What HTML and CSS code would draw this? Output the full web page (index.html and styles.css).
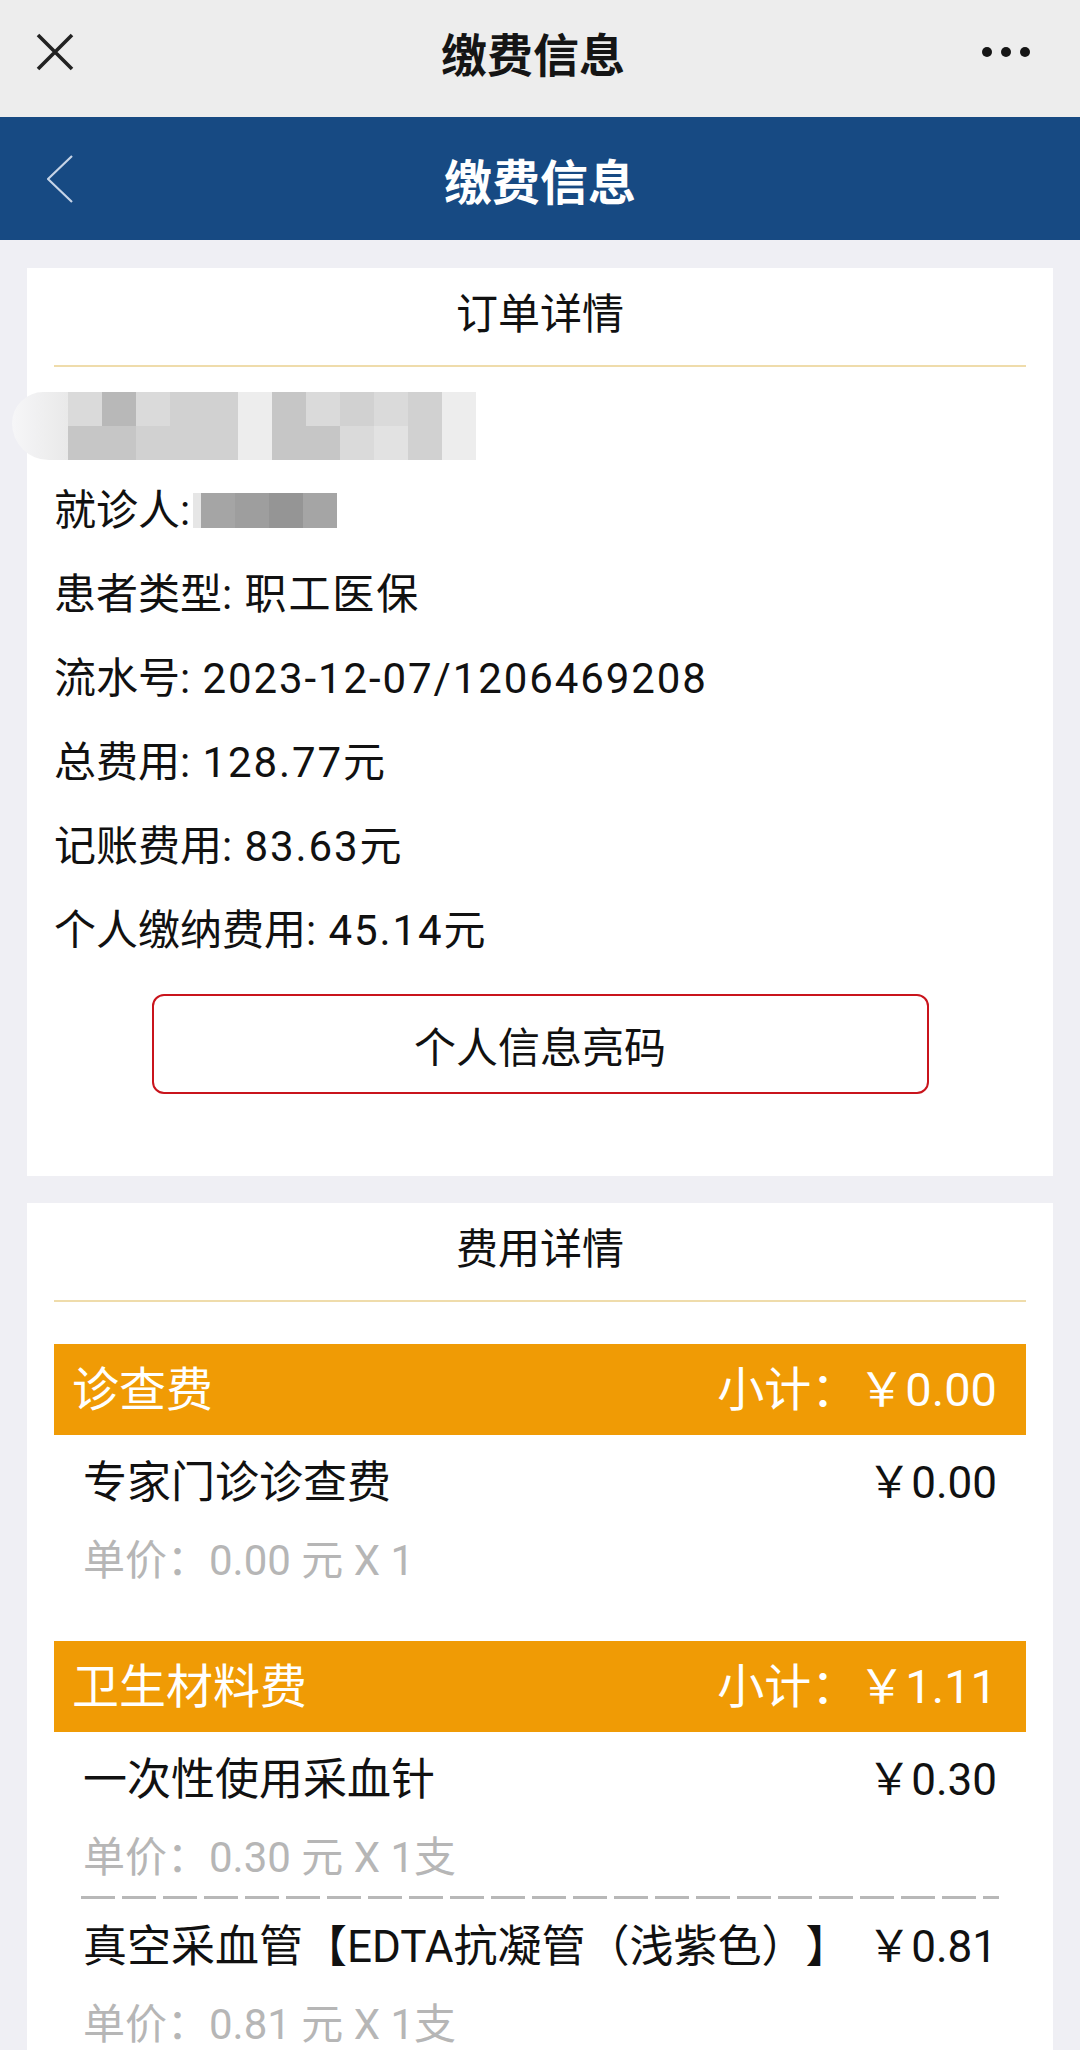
FILE: index.html
```html
<!doctype html>
<html lang="zh-CN">
<head>
	<meta charset="UTF-8">
	<title>缴费信息</title>
	<link rel="stylesheet" href="styles.css">
</head>
<body>
	<div class="topbar">
		<span class="close">
			<svg width="38" height="38" viewBox="0 0 38 38"><path d="M2 2L36 36M36 2L2 36" stroke="#222" stroke-width="3.6" fill="none"/></svg>
		</span>
		<h1 class="topbar_title">缴费信息</h1>
		<span class="more"><i></i><i></i><i></i></span>
	</div>
	<div class="header">
		<span class="back">
			<svg width="26" height="48" viewBox="0 0 26 48"><path d="M25 1L1 24L25 47" stroke="#c6d4e7" stroke-width="2.2" fill="none"/></svg>
		</span>
		<h2 class="header_title">缴费信息</h2>
		<span></span>
	</div>

	<div class="warp">
		<div class="card">
			<div class="card_title">订单详情</div>
			<div class="mask">
				<span class="smear"></span>
				<div class="pix">
					<i class="s2"></i><i class="s5"></i><i class="s2"></i><i class="s3"></i><i class="s3"></i><i class="s1"></i>
					<i class="s4"></i><i class="s2"></i><i class="s3"></i><i class="s2"></i><i class="s3"></i><i class="s1"></i>
					<i class="s4"></i><i class="s4"></i><i class="s3"></i><i class="s3"></i><i class="s3"></i><i class="s1"></i>
					<i class="s4"></i><i class="s4"></i><i class="s2"></i><i class="s6"></i><i class="s3"></i><i class="s1"></i>
				</div>
			</div>
			<div class="info">
				<div class="row">就诊人:<span class="name_mask"><i class="l1"></i><i class="d1"></i><i class="d2"></i><i class="d3"></i><i class="d1"></i></span></div>
				<div class="row">患者类型:<span class="val"> 职工医保</span></div>
				<div class="row">流水号:<span class="val"> 2023-12-07/1206469208</span></div>
				<div class="row">总费用:<span class="val"> 128.77</span>元</div>
				<div class="row">记账费用:<span class="val"> 83.63</span>元</div>
				<div class="row">个人缴纳费用:<span class="val"> 45.14</span>元</div>
			</div>
			<div class="btn">个人信息亮码</div>
		</div>

		<div class="card card_fee">
			<div class="card_title">费用详情</div>
			<div class="group">
				<div class="bar"><span>诊查费</span><span>小计：￥0.00</span></div>
				<div class="item">
					<div class="item_top"><span>专家门诊诊查费</span><span>￥0.00</span></div>
					<div class="item_price">单价：0.00 元 X 1</div>
				</div>
			</div>
			<div class="group">
				<div class="bar"><span>卫生材料费</span><span>小计：￥1.11</span></div>
				<div class="item">
					<div class="item_top"><span>一次性使用采血针</span><span>￥0.30</span></div>
					<div class="item_price">单价：0.30 元 X 1支</div>
				</div>
				<div class="sep"></div>
				<div class="item">
					<div class="item_top"><span>真空采血管【EDTA抗凝管（浅紫色）】</span><span>￥0.81</span></div>
					<div class="item_price">单价：0.81 元 X 1支</div>
				</div>
			</div>
		</div>
	</div>
</body>
</html>
```

FILE: styles.css
```css
*{
	margin: 0;
	padding: 0;
	box-sizing: border-box;
}
body{
	background: #efeff4;
	font-family: Roboto, "Noto Sans CJK SC", sans-serif;
	color: #111;
	text-spacing-trim: space-all;
}
.topbar{
	height: 117px;
	padding: 0 50px 13px 36px;
	background: #ededed;
	display: grid;
	grid-template-columns: 1fr auto 1fr;
	align-items: center;
}
.close svg{
	display: block;
}
.topbar_title{
	font-size: 46px;
	font-weight: bold;
	color: #151515;
}
.more{
	display: flex;
	justify-content: flex-end;
	gap: 9px;
}
.more i{
	width: 10px;
	height: 10px;
	border-radius: 50%;
	background: #161616;
}
.header{
	height: 123px;
	padding: 0 47px;
	background: #174a83;
	display: grid;
	grid-template-columns: 1fr auto 1fr;
	align-items: center;
}
.back svg{
	display: block;
}
.header_title{
	font-size: 48px;
	font-weight: bold;
	color: #fff;
}

.warp{
	padding: 28px 27px 40px;
	display: flex;
	flex-direction: column;
	gap: 27px;
}
.card{
	background: #fff;
	padding: 0 27px 82px;
}
.card_title{
	font-size: 42px;
	line-height: 48px;
	padding: 23px 0 26px;
	text-align: center;
	border-bottom: 2px solid #efdcab;
}

.mask{
	display: flex;
	margin: 25px 0 0 -42px;
	height: 68px;
}
.smear{
	width: 56px;
	border-radius: 34px 0 0 40px;
	background: linear-gradient(to right, #f6f6f8, #e9e9e9);
}
.pix{
	display: grid;
	grid-template-columns: repeat(12, 34px);
	grid-auto-rows: 34px;
}
.s1{ background: #ededed; }
.s2{ background: #dadada; }
.s3{ background: #d1d1d1; }
.s4{ background: #c6c6c6; }
.s5{ background: #b8b8b8; }
.s6{ background: #e2e2e2; }

.info{
	margin-top: 9px;
	font-size: 42px;
}
.row{
	line-height: 84px;
	white-space: nowrap;
}
.val{
	letter-spacing: 1.9px;
}
.name_mask{
	display: inline-flex;
	height: 35px;
	margin: -6px 0 0 3px;
	vertical-align: middle;
}
.name_mask i{
	width: 34px;
}
.name_mask .l1{ width: 8px; background: #e6e6e6; }
.d1{ background: #a5a5a5; }
.d2{ background: #9e9e9e; }
.d3{ background: #959595; }

.btn{
	width: 777px;
	height: 100px;
	margin: 21px auto 0;
	border: 2px solid #c9141c;
	border-radius: 12px;
	display: flex;
	align-items: center;
	justify-content: center;
	font-size: 42px;
}

.card_fee{
	padding-bottom: 60px;
}
.group{
	margin-top: 42px;
}
.bar{
	height: 91px;
	padding: 0 29px 8px 18px;
	background: #f09b05;
	color: #fff;
	font-size: 47px;
	display: flex;
	justify-content: space-between;
	align-items: center;
}
.item{
	padding: 16px 29px 6px;
}
.item_top{
	display: flex;
	justify-content: space-between;
	font-size: 44px;
	line-height: 64px;
	white-space: nowrap;
}
.item_price{
	margin-top: 14px;
	font-size: 42px;
	line-height: 64px;
	color: #b6b6b6;
}
.sep{
	height: 3px;
	margin: 0 27px;
	background: repeating-linear-gradient(90deg, #b8b8b8 0 34px, transparent 34px 41px);
}
```
